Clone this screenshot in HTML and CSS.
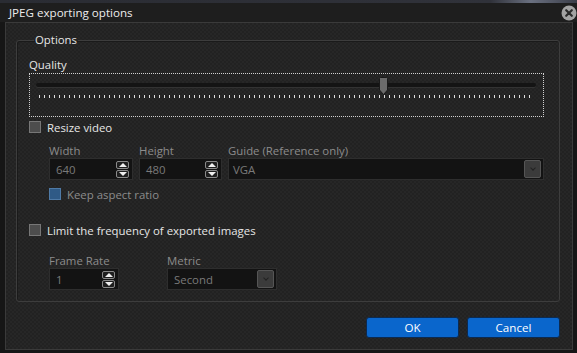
FILE: index.html
```html
<!DOCTYPE html>
<html lang="en">
<head>
    <meta charset="UTF-8">
    <title>JPEG exporting options</title>
    <link rel="stylesheet" href="styles.css">
</head>
<body>
    <div class="window">
        <div class="strip"></div>
        <div class="titlebar">
            <span class="title">JPEG exporting options</span>
            <span class="close">
                <svg width="16" height="16" viewBox="0 0 16 16">
                    <circle cx="8" cy="8" r="7.5" fill="#a3a3a3"/>
                    <path d="M5.2 5.2 L10.8 10.8 M10.8 5.2 L5.2 10.8" stroke="#2a2a2a" stroke-width="2.2" stroke-linecap="round"/>
                </svg>
            </span>
        </div>
        <div class="frame">
            <div class="content">
                <fieldset class="group">
                    <legend>Options</legend>

                    <div class="label bright quality">Quality</div>
                    <div class="slider">
                        <div class="track">
                            <svg class="thumb" width="9" height="18" viewBox="0 0 9 18">
                                <path d="M1.5 0.5 H7.5 Q8.5 0.5 8.5 1.5 V13 L4.5 17.5 L0.5 13 V1.5 Q0.5 0.5 1.5 0.5 Z" fill="#6b6b6b" stroke="#1a1a1a"/>
                            </svg>
                        </div>
                        <div class="ticks"></div>
                    </div>

                    <label class="check">
                        <span class="box"></span>
                        <span class="bright">Resize video</span>
                    </label>

                    <div class="sub">
                        <div class="fields">
                            <div class="field">
                                <div class="label dim">Width</div>
                                <div class="input w-size">
                                    <span>640</span>
                                    <span class="spin"><i class="up"></i><i class="down"></i></span>
                                </div>
                            </div>
                            <div class="field">
                                <div class="label dim">Height</div>
                                <div class="input h-size">
                                    <span>480</span>
                                    <span class="spin"><i class="up"></i><i class="down"></i></span>
                                </div>
                            </div>
                            <div class="field grow">
                                <div class="label dim">Guide (Reference only)</div>
                                <div class="input select">
                                    <span>VGA</span>
                                    <span class="drop"><i></i></span>
                                </div>
                            </div>
                        </div>
                        <label class="check small">
                            <span class="box blue"></span>
                            <span class="dim">Keep aspect ratio</span>
                        </label>
                    </div>

                    <label class="check limit">
                        <span class="box"></span>
                        <span class="bright">Limit the frequency of exported images</span>
                    </label>

                    <div class="sub">
                        <div class="fields rate-row">
                            <div class="field">
                                <div class="label dim">Frame Rate</div>
                                <div class="input rate">
                                    <span>1</span>
                                    <span class="spin"><i class="up"></i><i class="down"></i></span>
                                </div>
                            </div>
                            <div class="field metric-field">
                                <div class="label dim">Metric</div>
                                <div class="input metric">
                                    <span>Second</span>
                                    <span class="drop"><i></i></span>
                                </div>
                            </div>
                        </div>
                    </div>
                </fieldset>

                <div class="buttons">
                    <button class="btn">OK</button>
                    <button class="btn">Cancel</button>
                </div>
            </div>
        </div>
    </div>
</body>
</html>
```

FILE: styles.css
```css
*{
    box-sizing: border-box;
}

body{
    margin: 0;
    width: 577px;
    height: 353px;
    overflow: hidden;
    background: #141414;
    font-family: 'Open Sans', 'Noto Sans', sans-serif;
    font-size: 11.4px;
}

.window{
    display: flex;
    flex-direction: column;
    height: 353px;
}

.strip{
    height: 3px;
    background: linear-gradient(90deg, #2a2c33 0%, #30323a 85%, #6a7080 92%, #3a3d48 100%);
}

.titlebar{
    height: 19px;
    display: flex;
    align-items: center;
    justify-content: space-between;
    padding: 0 0 0 9px;
    background: #1e1e1e;
    color: #ececec;
    font-size: 11.6px;
}

.close{
    display: flex;
    margin-top: 1px;
}

.frame{
    flex: 1;
    padding: 0 4px 3px 5px;
    background: #161616;
}

.content{
    height: 100%;
    border: 1px solid #3a3a3a;
    background: repeating-conic-gradient(#272727 0 25%, #222 0 50%) 0 0 / 4px 4px;
    padding: 10px 12px 0 10px;
}

.group{
    margin: 0;
    border: 1px solid #3d3d3d;
    border-radius: 3px;
    padding: 2px 15px 11px 12px;
    box-shadow: inset 1px 1px 0 #1a1a1a;
}

.group legend{
    color: #e6e6e6;
    padding: 0 1px;
    margin-left: 5px;
    line-height: 14px;
}

.label{
    line-height: 14px;
}

.quality{
    margin-top: 9px;
}

.bright{
    color: #e6e6e6;
}

.dim{
    color: #8c8c8c;
}

.slider{
    height: 44px;
    margin-top: 1px;
    border: 1px dotted #d0d0d0;
    padding: 6px 7px 0 6px;
}

.track{
    position: relative;
    height: 4px;
    margin-top: 3px;
    background: #141414;
    border-radius: 2px;
    box-shadow: 0 1px 0 #333;
}

.thumb{
    position: absolute;
    left: 343px;
    top: -6px;
}

.ticks{
    height: 3px;
    margin: 8px 2px 0 3px;
    background: repeating-linear-gradient(90deg, #e0e0e0 0 1px, transparent 1px 5px);
}

.check{
    display: flex;
    align-items: center;
    gap: 6px;
    height: 14px;
    margin-top: 3px;
}

.box{
    width: 12px;
    height: 12px;
    background: #4d4d4d;
    border: 1px solid #777;
}

.box.blue{
    background: #2f5a86;
    border-color: #4f7aa6;
}

.check.small{
    margin-top: 7px;
}

.check.limit{
    margin-top: 22px;
}

.sub{
    padding-left: 20px;
}

.fields{
    display: flex;
    gap: 6px;
    margin-top: 10px;
}

.fields.rate-row{
    margin-top: 17px;
}

.metric-field{
    margin-left: 42px;
}

.grow{
    flex: 1;
}

.input{
    display: flex;
    align-items: center;
    justify-content: space-between;
    height: 22px;
    background: #131313;
    border: 1px solid #2e2e2e;
    color: #7a7a7a;
    padding: 0 2px 0 6px;
}

.w-size{
    width: 84px;
}

.h-size{
    width: 83px;
}

.rate{
    width: 70px;
}

.metric{
    width: 110px;
}

.select{
    padding-left: 4px;
}

.spin{
    display: flex;
    flex-direction: column;
    gap: 1px;
    margin-right: 1px;
}

.spin i{
    display: block;
    width: 13px;
    height: 8px;
    border: 1px solid #8a8a8a;
    border-radius: 2px;
    background: #1e1e1e;
    position: relative;
}

.spin i::after{
    content: "";
    position: absolute;
    left: 2px;
    border-left: 4px solid transparent;
    border-right: 4px solid transparent;
}

.spin .up::after{
    top: 1px;
    border-bottom: 4px solid #f0f0f0;
}

.spin .down::after{
    top: 1px;
    border-top: 4px solid #f0f0f0;
}

.drop{
    display: flex;
    align-items: center;
    justify-content: center;
    width: 17px;
    height: 18px;
    background: #3b3b3b;
    border: 1px solid #555;
    border-radius: 2px;
}

.drop i{
    width: 4px;
    height: 4px;
    border-right: 1px solid #222;
    border-bottom: 1px solid #222;
    transform: rotate(45deg);
    margin-top: -2px;
}

.buttons{
    display: flex;
    justify-content: flex-end;
    gap: 8px;
    margin-top: 15px;
}

.btn{
    width: 93px;
    height: 21px;
    border: 1px solid #0c2a50;
    border-radius: 3px;
    background: #0a66cc;
    color: #ffffff;
    font-family: inherit;
    font-size: 11.6px;
    padding: 0;
}
```
